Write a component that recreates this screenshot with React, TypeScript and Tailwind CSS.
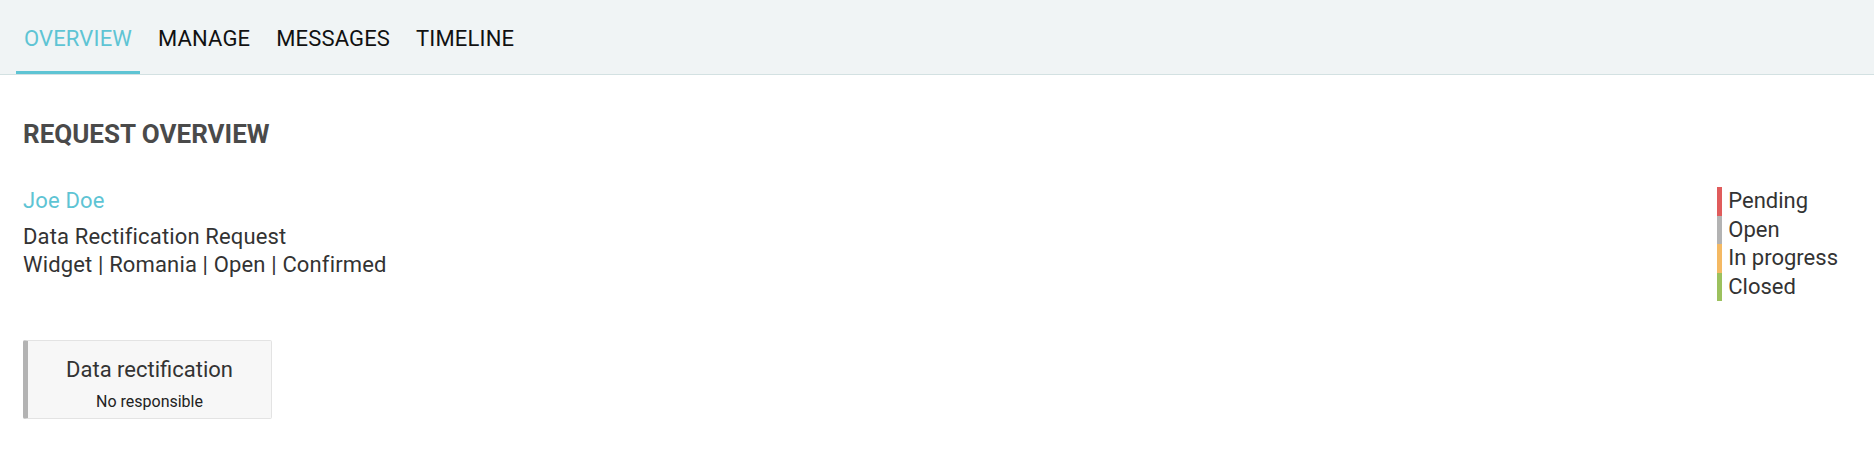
import React from "react";

const tabs = ["OVERVIEW", "MANAGE", "MESSAGES", "TIMELINE"];

const legend = [
  { label: "Pending", color: "bg-[#e05c5c]" },
  { label: "Open", color: "bg-[#b3b3b3]" },
  { label: "In progress", color: "bg-[#f4b963]" },
  { label: "Closed", color: "bg-[#9cc15e]" },
];

const App = () => {
  return (
    <div className="min-h-screen bg-white font-['Roboto',sans-serif] text-[#333]">
      {/* Tabs */}
      <nav className="h-[75px] bg-[#f0f4f5] border-b border-[#d3e1e2] px-4 flex gap-[10px]">
        {tabs.map((t, i) => (
          <div
            key={t}
            className={
              i === 0
                ? "h-[74px] px-2 pt-[6px] flex items-center text-[22px] tracking-[0.15px] text-[#5ec4d4] border-b-[3px] border-[#5ec4d4]"
                : "h-[74px] px-2 pt-[6px] flex items-center text-[22px] tracking-[0.15px] text-[#111] border-b-[3px] border-transparent"
            }
          >
            {t}
          </div>
        ))}
      </nav>

      <main className="px-[23px]">
        <h1 className="pt-[44px] text-[26px] leading-[30px] font-bold text-[#4a4a4a]">
          REQUEST OVERVIEW
        </h1>

        <div className="mt-[38px] flex justify-between items-start text-[22px] leading-[28.6px] tracking-[0.15px]">
          <div>
            <div className="text-[#5ec4d4] mb-[7px]">Joe Doe</div>
            <div>Data Rectification Request</div>
            <div>Widget | Romania | Open | Confirmed</div>
          </div>
          <div className="mr-[13px] tracking-normal">
            {legend.map((l) => (
              <div key={l.label} className="flex items-stretch">
                <span className={`w-[5px] ${l.color}`} />
                <span className="pl-[6px]">{l.label}</span>
              </div>
            ))}
          </div>
        </div>

        <div className="mt-[39px] w-[249px] h-[79px] bg-[#f7f7f7] border border-[#e3e3e3] border-l-[5px] border-l-[#b3b3b3] rounded-[2px] text-center pt-[15px]">
          <div className="text-[22px] leading-[28.6px]">Data rectification</div>
          <div className="mt-[6px] text-[16px] leading-[21px] text-[#222]">No responsible</div>
        </div>
      </main>
    </div>
  );
};

export default App;
